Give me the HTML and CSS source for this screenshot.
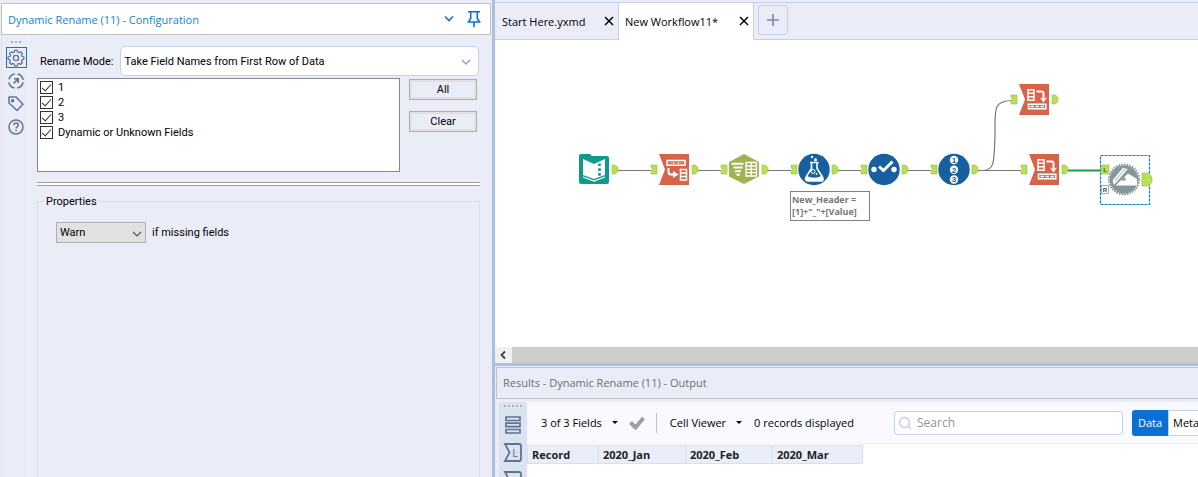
FILE: index.html
```html
<!DOCTYPE html>
<html lang="en">
<head>
  <meta charset="UTF-8" />
  <meta name="viewport" content="width=device-width, initial-scale=1" />
  <title>New Workflow11*</title>
  <link rel="stylesheet" href="styles.css">
</head>
<body>
  <aside class="config">
    <header class="config-title">
      <h1>Dynamic Rename (11) - Configuration</h1>
      <button class="icon-btn" aria-label="Window options">
        <svg width="12" height="20" viewBox="0 0 12 20"><path d="M2 7.500l4 4 4-4" fill="none" stroke="#0c70d2" stroke-width="1.600"/></svg>
      </button>
      <button class="icon-btn" aria-label="Pin panel">
        <svg width="14" height="20" viewBox="0 0 14 20"><path d="M1 2.700h12M3.700 3v6.500L1.500 13h11L10.300 9.500V3M7 13v5" fill="none" stroke="#0c70d2" stroke-width="1.600"/></svg>
      </button>
    </header>
    <div class="config-body">
      <nav class="rail">
        <span class="grip"></span>
        <button class="rail-btn active" aria-label="Configuration">
          <svg width="18" height="18" viewBox="0 0 18 18" fill="none" stroke="#5f7393" stroke-width="1.300">
            <path d="M7.600 1.800h2.800l.5 2 1.300.6 1.800-1.100 2 2-1.100 1.800.5 1.300 2 .5v2.400l-2 .5-.6 1.300 1.100 1.800-2 1.900-1.800-1-1.200.5-.5 2H7.600l-.5-2-1.300-.5-1.800 1-1.900-1.900 1-1.800-.5-1.300-2-.5V8.900l2-.5.600-1.300-1.100-1.800 2-2 1.800 1.100 1.200-.6z" transform="translate(.5 -.400) scale(.94)"/>
            <circle cx="9" cy="9" r="2.600"/>
          </svg>
        </button>
        <button class="rail-btn" aria-label="Navigation">
          <svg width="18" height="18" viewBox="0 0 18 18" fill="none" stroke="#5f7393" stroke-width="1.600">
            <circle cx="9" cy="9" r="7.200" stroke-dasharray="8.300 3" stroke-dashoffset="-1.500"/>
            <path d="M6.500 11.500l4.500-4.500M7 6.800h4.200V11"/>
          </svg>
        </button>
        <button class="rail-btn" aria-label="Annotation">
          <svg width="18" height="18" viewBox="0 0 18 18" fill="none" stroke="#5f7393" stroke-width="1.500">
            <path d="M2 2h7l7 7.200-6 6.300-8-7.500z" stroke-linejoin="round"/><circle cx="5.600" cy="5.800" r="1" fill="#5f7393"/>
          </svg>
        </button>
        <button class="rail-btn" aria-label="Help">
          <svg width="18" height="18" viewBox="0 0 18 18" fill="none" stroke="#5f7393" stroke-width="1.500">
            <circle cx="9" cy="9" r="7"/><path d="M6.800 7.200c0-3 4.500-2.800 4.500-.1 0 1.700-2.200 1.600-2.200 3.300M9.100 11.700v1.500"/>
          </svg>
        </button>
      </nav>
      <form class="settings">
        <div class="mode-row">
          <label for="mode">Rename Mode:</label>
          <div class="select-box mode-box">
            <select id="mode"><option>Take Field Names from First Row of Data</option></select>
            <svg class="chevron" width="10" height="8" viewBox="0 0 10 8"><path d="M1 2l4 4 4-4" fill="none" stroke="#94a3c0" stroke-width="1.500"/></svg>
          </div>
        </div>
        <div class="fields-row">
          <div class="field-list">
            <label><input type="checkbox" checked>1</label>
            <label><input type="checkbox" checked>2</label>
            <label><input type="checkbox" checked>3</label>
            <label><input type="checkbox" checked>Dynamic or Unknown Fields</label>
          </div>
          <div class="field-actions">
            <button type="button">All</button>
            <button type="button">Clear</button>
          </div>
        </div>
        <div class="splitter"></div>
        <fieldset class="properties">
          <legend>Properties</legend>
          <div class="select-box warn-box">
            <select id="missing"><option>Warn</option></select>
            <svg class="chevron" width="10" height="8" viewBox="0 0 10 8"><path d="M1 2l4 4 4-4" fill="none" stroke="#555" stroke-width="1.200"/></svg>
          </div>
          <label for="missing">if missing fields</label>
        </fieldset>
      </form>
    </div>
  </aside>

  <main class="workspace">
    <div class="tabs">
      <div class="tab">
        <a href="#">Start Here.yxmd</a>
        <button class="icon-btn" aria-label="Close Start Here"><svg width="10" height="10" viewBox="0 0 10 10"><path d="M1 1l8 8M9 1L1 9" stroke="#000" stroke-width="1.500"/></svg></button>
      </div>
      <div class="tab current">
        <a href="#">New Workflow11*</a>
        <button class="icon-btn" aria-label="Close New Workflow11"><svg width="10" height="10" viewBox="0 0 10 10"><path d="M1 1l8 8M9 1L1 9" stroke="#000" stroke-width="1.500"/></svg></button>
      </div>
      <div class="tab-rest">
        <button class="add-tab" aria-label="New workflow"><svg width="14" height="14" viewBox="0 0 14 14"><path d="M7 1v12M1 7h12" stroke="#7688a8" stroke-width="1.600"/></svg></button>
      </div>
    </div>

    <section class="canvas">
      <svg class="flow" width="100%" height="100%">
        <defs>
          <path id="out" d="M0 0h3.500l2.500 2.500v4L3.500 9H0z" fill="#b9e051" stroke="#94bd4b" stroke-width=".6"/>
          <path id="in" d="M0 0h6v9H0V6.500l1.500-2L0 2.500z" fill="#b9e051" stroke="#94bd4b" stroke-width=".6"/>
          <g id="transpose">
            <path d="M0 0h30v31H0l6-15.500z" fill="#d7644a"/>
            <g fill="none" stroke="#fff" stroke-width="1.500">
              <path d="M9 5.800h6v10.400H9zM9 9.200h6M9 12.700h6"/>
              <path d="M9.500 20.200h17.300v4.600H9.500z"/>
              <path d="M17.500 7.500h5q2 0 2 2v6" stroke-width="2"/>
              <path d="M11.500 22.500h13.500" stroke-dasharray="3.500 1.500"/>
            </g>
            <path d="M21 13.500l3.500 1.500 3.500-1.500-3.500 5z" fill="#fff"/>
          </g>
        </defs>

        <!-- connections -->
        <g fill="none" stroke="#777" stroke-width="1.200">
          <path d="M123 130.500h33M203 130.500h23M273 130.500h23M343 130.500h23M413 130.500h23M483 130.500h43"/>
          <path d="M483 130.500h4c13 0 12-8 13-36 0-26-2-34 18-34"/>
          <path d="M573 130.500h34" stroke="#12a04a" stroke-width="2"/>
        </g>

        <!-- input data -->
        <g transform="translate(84 114)">
          <path d="M2 0h9l2 2h15q2 0 2 2v24q0 2-2 2H2q-2 0-2-2V2q0-2 2-2z" fill="#0f9b8a"/>
          <path d="M4 5l11 5v15L4 21zM26 5l-11 5v15l11-4z" fill="#fff"/>
          <path d="M4 23l11 4 11-4" fill="none" stroke="#fff" stroke-width="1.200"/>
          <path d="M20.500 9.500v13" stroke="#0f9b8a" stroke-width="2.600" stroke-dasharray="2.600 2.200"/>
          <use href="#out" x="33" y="11"/>
        </g>

        <!-- cross tab -->
        <g transform="translate(164 114)">
          <path d="M0 0h30v31H0l6-15.500z" fill="#d7644a"/>
          <g fill="none" stroke="#fff" stroke-width="1.500">
            <path d="M8 6.500h18v4.800H8zM10 9h14" />
            <path d="M21.500 15.500h6V26h-6zM21.500 19h6M21.500 22.500h6"/>
            <path d="M9.500 14v4q0 2.500 2.500 2.500h3" stroke-width="2"/>
          </g>
          <path d="M14 17l5.500 3.500L14 24z" fill="#fff"/>
          <path d="M10 8.900h14" stroke="#d7644a" stroke-width="1.500" stroke-dasharray="4 1"/>
          <use href="#in" x="-8" y="11"/><use href="#out" x="33" y="11"/>
        </g>

        <!-- data cleansing -->
        <g transform="translate(234 114)">
          <path d="M15 0l15 8v14.500L15 30 0 22.500V8z" fill="#a1b252"/>
          <path d="M2.500 9.800h12M4.500 13.500h9M6 17.200h6M7.500 20.800h3.500" stroke="#fff" stroke-width="2"/>
          <path d="M17 8.500h10.500v13.500H17zM17 12h10.500M17 15.300h10.500M17 18.600h10.500M22.200 8.500V22" fill="none" stroke="#fff" stroke-width="1.300"/>
          <use href="#in" x="-8" y="11"/><use href="#out" x="33" y="11"/>
        </g>

        <!-- formula -->
        <g transform="translate(304 114)">
          <circle cx="15" cy="15.500" r="15.700" fill="#175f9e"/>
          <path d="M11 8.500h8.500M12.500 9v5.500L7 23q-1.500 4 2 4h13q3 0 1.500-4l-5.500-8.500V9" fill="none" stroke="#fff" stroke-width="1.600"/>
          <path d="M7 21.500q8 4.500 16.500 0l1 3.500q0 2-2 2H9q-2 0-2-2z" fill="#fff"/>
          <circle cx="14" cy="17.500" r="2" fill="none" stroke="#fff"/><circle cx="17.500" cy="20" r=".9" fill="#fff"/>
          <circle cx="13" cy="3" r="1.200" fill="#fff"/><circle cx="16.500" cy="5.800" r="1.500" fill="#fff"/>
          <use href="#in" x="-8" y="11"/><use href="#out" x="33" y="11"/>
        </g>

        <!-- select -->
        <g transform="translate(374 114)">
          <circle cx="15" cy="15.500" r="15.700" fill="#175f9e"/>
          <circle cx="5" cy="15.500" r="2.700" fill="#fff"/><circle cx="25" cy="15.500" r="2.700" fill="#fff"/>
          <path d="M10 12.500l4.500 4L23.500 7.500" fill="none" stroke="#fff" stroke-width="3"/>
          <use href="#in" x="-8" y="11"/><use href="#out" x="33" y="11"/>
        </g>

        <!-- record id -->
        <g transform="translate(444 114)">
          <circle cx="15" cy="15.500" r="15.700" fill="#175f9e"/>
          <g fill="#fff"><circle cx="15" cy="6" r="4.200"/><circle cx="15" cy="15.800" r="4.200"/><circle cx="15" cy="25.500" r="4.200"/></g>
          <g class="digits"><text x="15" y="9">1</text><text x="15" y="19">2</text><text x="15" y="28">3</text></g>
          <use href="#in" x="-8" y="11"/><use href="#out" x="33" y="11"/>
        </g>

        <!-- transpose, both branches -->
        <g transform="translate(524 44)">
          <use href="#transpose"/><use href="#in" x="-8" y="11"/><use href="#out" x="33" y="11"/>
        </g>
        <g transform="translate(534 114)">
          <use href="#transpose"/><use href="#in" x="-8" y="11"/><use href="#out" x="33" y="11"/>
        </g>

        <!-- dynamic rename, selected -->
        <g transform="translate(605 115)">
          <rect x=".5" y=".5" width="49" height="49" fill="none" stroke="#0c78d4" stroke-width="1.200" stroke-dasharray="3 1"/>
          <circle cx="24" cy="24.500" r="14.200" fill="#86979b"/>
          <circle cx="24" cy="24.500" r="15" fill="none" stroke="#86979b" stroke-width="1.800" stroke-dasharray="1.600 1.100"/>
          <path d="M16.500 29.500L28 18.500l9 5.500v6.500H16z" fill="#fff"/>
          <path d="M21 25.500l3.500-3.500 1.500 3.500z" fill="#86979b"/>
          <path d="M12.500 25L23 12.500l5 1.500L17 27l-3.500 3.500z" fill="#fff" stroke="#86979b" stroke-width=".6"/>
          <path d="M15 26L25.500 13.500" stroke="#86979b" stroke-width=".8"/>
          <rect x="1" y="10" width="8" height="9" fill="#b9e051" stroke="#94bd4b" stroke-width=".6"/>
          <rect x="1.500" y="30.500" width="7" height="8" fill="#fff" stroke="#999" stroke-width=".8"/>
          <text class="anchor" x="5" y="17">L</text>
          <text class="anchor" x="5" y="37">R</text>
          <path d="M42 18h6l4 4v5l-4 4h-6z" fill="#b9e051" stroke="#94bd4b" stroke-width=".6"/>
        </g>
      </svg>
      <div class="annotation">New_Header =<br>[1]+"_"+[Value]</div>
    </section>

    <div class="hscroll">
      <button aria-label="Scroll left"><svg width="8" height="10" viewBox="0 0 8 10"><path d="M6 1.500L2.500 5 6 8.500" fill="none" stroke="#444" stroke-width="1.800"/></svg></button>
    </div>

    <section class="results">
      <h2>Results - Dynamic Rename (11) - Output</h2>
      <div class="results-body">
        <nav class="results-rail">
          <span class="grip"></span>
          <button class="icon-btn" aria-label="Messages"><svg width="18" height="20" viewBox="0 0 18 20"><path d="M2 2h14v3.500H2zM2 8.200h14v3.500H2zM2 14.500h14V18H2z" fill="none" stroke="#5f7393" stroke-width="1.700"/></svg></button>
          <button class="icon-btn" aria-label="Left input"><svg width="20" height="20" viewBox="0 0 20 20"><path d="M2 1h14q2 0 2 2v13q0 2-2 2H2l4.500-8.500z" fill="none" stroke="#5f7393" stroke-width="1.800"/><text class="rail-letter" x="12" y="14">L</text></svg></button>
          <button class="icon-btn" aria-label="Right input"><svg width="20" height="20" viewBox="0 0 20 20"><path d="M2 1h14q2 0 2 2v13q0 2-2 2H2l4.500-8.500z" fill="none" stroke="#5f7393" stroke-width="1.800"/></svg></button>
        </nav>
        <div class="results-main">
          <div class="toolbar">
            <button class="menu-btn">3 of 3 Fields<span class="caret"></span></button>
            <button class="icon-btn apply" aria-label="Apply"><svg width="16" height="14" viewBox="0 0 16 14"><path d="M1.500 6.500l5 5L14.500 2" fill="none" stroke="#a0a0a0" stroke-width="4"/></svg></button>
            <span class="divider"></span>
            <button class="menu-btn">Cell Viewer<span class="caret"></span></button>
            <span class="count">0 records displayed</span>
            <div class="search">
              <svg width="14" height="14" viewBox="0 0 14 14"><circle cx="6.500" cy="6.500" r="5" fill="none" stroke="#c5d0e6" stroke-width="1.500"/><path d="M10 10l3 3" stroke="#c5d0e6" stroke-width="1.500"/></svg>
              <input type="search" placeholder="Search" aria-label="Search">
            </div>
            <div class="view-switch">
              <button class="on">Data</button><button>Meta</button>
            </div>
          </div>
          <table>
            <colgroup><col class="c-record"><col class="c-month"><col class="c-month"><col class="c-last"></colgroup>
            <thead><tr><th>Record</th><th>2020_Jan</th><th>2020_Feb</th><th>2020_Mar</th></tr></thead>
          </table>
        </div>
      </div>
    </section>
  </main>
</body>
</html>
```
FILE: styles.css
```css
* {
  box-sizing: border-box;
}
body {
  margin: 0;
  height: 100vh;
  display: flex;
  overflow: hidden;
  background: #eaedf8;
  color: #000;
  font-family: "Open Sans", "Noto Sans", sans-serif;
  font-size: 11px;
}
button, input, select {
  font: inherit;
  color: inherit;
}
svg {
  display: block;
}
h1, h2 {
  margin: 0;
  font-size: 11px;
  font-weight: 400;
}
.icon-btn {
  padding: 0;
  border: 0;
  background: none;
}

/* configuration panel */
.config {
  flex: 0 0 492px;
  display: flex;
  flex-direction: column;
  padding: 3px 1px 0;
}
.config-title {
  display: flex;
  align-items: center;
  gap: 12px;
  height: 32px;
  padding: 0 9px 0 6px;
  background: #fff;
  border: 1px solid #c2c2c2;
  color: #1583cf;
}
.config-title h1 {
  flex: 1;
}
.config-body {
  flex: 1;
  display: flex;
}
.rail {
  flex: 0 0 28px;
  display: flex;
  flex-direction: column;
  align-items: center;
  gap: 2px;
  margin-right: 8px;
  padding: 6px 0 0 2px;
  border-left: 1px solid #e0e2ea;
  border-right: 1px solid #f1f3fa;
}
.grip {
  width: 11px;
  height: 2px;
  margin-bottom: 2px;
  background: repeating-linear-gradient(to right, #b3b3b3 0 2px, transparent 2px 4px);
}
.rail-btn {
  width: 21px;
  height: 21px;
  padding: 0;
  display: flex;
  align-items: center;
  justify-content: center;
  background: none;
  border: 1px solid transparent;
}
.rail-btn.active {
  border-color: #0c78d4;
}
.settings {
  flex: 1;
  display: flex;
  flex-direction: column;
  padding: 11px 11px 0 0;
  font-family: Roboto, "Liberation Sans", sans-serif;
}
.mode-row {
  display: flex;
  align-items: center;
  gap: 7px;
  padding-left: 3px;
  margin-right: 1px;
}
.mode-row label {
  flex: 0 0 73px;
  white-space: nowrap;
}
.select-box {
  position: relative;
}
.select-box select {
  appearance: none;
  width: 100%;
  height: 100%;
  padding: 0 3px;
  border: 0;
  background: none;
}
.chevron {
  position: absolute;
  right: 7px;
  top: 50%;
  margin-top: -3px;
  pointer-events: none;
}
.mode-box {
  flex: 1;
  height: 30px;
  background: #fff;
  border: 1px solid #c6d0e8;
  border-radius: 5px;
}
.fields-row {
  display: flex;
  gap: 9px;
  margin: 2px 3px 0 0;
}
.field-list {
  flex: 1;
  height: 94px;
  padding: 1px 2px;
  background: #fff;
  border: 1px solid #828790;
}
.field-list label {
  display: flex;
  align-items: center;
  gap: 5px;
  height: 15px;
}
.field-list input {
  appearance: none;
  display: flex;
  justify-content: center;
  width: 13px;
  height: 13px;
  margin: 0;
  border: 1px solid #333;
  background: #fff;
}
.field-list input:checked::after {
  content: "";
  width: 4px;
  height: 8px;
  border: solid #333;
  border-width: 0 1px 1px 0;
  transform: rotate(42deg);
}
.field-actions {
  flex: 0 0 68px;
  display: flex;
  flex-direction: column;
  gap: 11px;
  padding-top: 1px;
}
.field-actions button {
  height: 21px;
  padding: 0;
  background: #eaedf8;
  border: 1px solid #adadad;
  box-shadow: inset 0 0 0 2px #e1e1e1;
}
.splitter {
  height: 4px;
  margin-top: 10px;
  border: solid #a0a0a0;
  border-width: 1px 0;
  background: #fff;
}
.properties {
  flex: 1;
  display: flex;
  align-items: flex-start;
  gap: 6px;
  margin: 9px 0 0;
  padding: 14px 18px 0;
  border: 1px solid #dcdcdc;
  border-bottom: 0;
}
.properties legend {
  margin-left: -12px;
  padding: 0 2px;
}
.properties label {
  line-height: 21px;
}
.warn-box {
  width: 90px;
  height: 21px;
  background: #e1e1e1;
  border: 1px solid #adadad;
}
.warn-box .chevron {
  right: 3px;
}

/* workflow side */
.workspace {
  flex: 1;
  min-width: 0;
  display: flex;
  flex-direction: column;
  border-left: 3px solid #adbee0;
}
.tabs {
  display: flex;
  height: 40px;
  padding-top: 2px;
}
.tab {
  display: flex;
  align-items: center;
  justify-content: space-between;
  width: 124px;
  padding: 0 4px 0 7px;
  border: solid #c6d0e8;
  border-width: 1px 1px 1px 0;
}
.tab a {
  color: #000;
  text-decoration: none;
}
.tab.current {
  width: 135px;
  padding-left: 6px;
  background: #fff;
  border-bottom-color: #fff;
}
.tab-rest {
  flex: 1;
  padding: 2px 0 0 4px;
  border: solid #c6d0e8;
  border-width: 1px 0;
}
.add-tab {
  display: flex;
  align-items: center;
  justify-content: center;
  width: 30px;
  height: 30px;
  padding: 0;
  background: none;
  border: 1px solid #c6d0e8;
  border-radius: 3px;
}
.canvas {
  position: relative;
  flex: 1;
  background: #fff;
}
.flow {
  position: absolute;
  inset: 0;
}
.digits {
  font: bold 8px "Liberation Sans", Arial, sans-serif;
  fill: #175f9e;
  text-anchor: middle;
}
.anchor {
  font: bold 6px "Liberation Sans", Arial, sans-serif;
  fill: #444;
  text-anchor: middle;
}
.annotation {
  position: absolute;
  left: 295px;
  top: 151px;
  width: 80px;
  padding: 2px 1px;
  background: #fff;
  border: 1px solid #808080;
  color: #777;
  font-size: 9px;
  font-weight: 700;
  line-height: 12px;
  white-space: nowrap;
}
.hscroll {
  height: 16px;
  background: #cdcdcd;
}
.hscroll button {
  width: 17px;
  height: 16px;
  padding: 0 4px;
  border: 0;
  background: #f0f0f0;
}

/* results */
.results {
  height: 114px;
  border-top: 3px solid #adbee0;
  overflow: hidden;
}
.results h2 {
  height: 32px;
  margin: 1px 0 0 1px;
  padding-left: 6px;
  border: 1px solid #c2c2c2;
  border-right: 0;
  color: #6e6e6e;
  line-height: 30px;
}
.results-body {
  display: flex;
  height: 100px;
  padding: 3px 0 0 4px;
}
.results-rail {
  flex: 0 0 28px;
  display: flex;
  flex-direction: column;
  align-items: center;
  gap: 8px;
  padding-top: 3px;
  background: #dbe2f0;
  border-radius: 4px 4px 0 0;
}
.results-rail .grip {
  width: 19px;
  margin-bottom: 0;
}
.rail-letter {
  font: 11px "Open Sans", sans-serif;
  fill: #5f7393;
  text-anchor: middle;
}
.results-main {
  flex: 1;
  min-width: 0;
  background: #fff;
}
.toolbar {
  display: flex;
  align-items: center;
  height: 42px;
  padding-left: 14px;
  background: #f8faff;
  border-bottom: 1px solid #eef0f5;
}
.menu-btn {
  display: flex;
  align-items: center;
  gap: 10px;
  padding: 0;
  border: 0;
  background: none;
  white-space: nowrap;
}
.caret {
  border: 3px solid transparent;
  border-top-color: #000;
  border-bottom: 0;
}
.apply {
  margin: 0 11px;
}
.divider {
  width: 1px;
  height: 20px;
  margin-right: 13px;
  background: #c2c2c2;
}
.count {
  flex: 1;
  margin-left: 12px;
  white-space: nowrap;
}
.search {
  display: flex;
  align-items: center;
  width: 229px;
  height: 24px;
  padding-left: 3px;
  background: #fff;
  border: 1px solid #c6d0e8;
  border-radius: 3px;
}
.search input {
  flex: 1;
  min-width: 0;
  padding: 0 5px;
  border: 0;
  background: none;
  font-size: 12px;
}
.search input::placeholder {
  color: #959595;
}
.view-switch {
  display: flex;
  margin-left: 9px;
}
.view-switch button {
  width: 30px;
  height: 26px;
  padding: 0 0 0 4px;
  border: 1px solid #c6d0e8;
  border-right: 0;
  background: #fff;
  text-align: left;
}
.view-switch .on {
  width: 36px;
  padding: 0;
  border: 0;
  border-radius: 3px 0 0 3px;
  background: #0c70d2;
  color: #fff;
  text-align: center;
}
table {
  table-layout: fixed;
  width: 336px;
  margin-top: 1px;
  border-collapse: collapse;
}
.c-record {
  width: 71px;
}
.c-month {
  width: 87px;
}
th {
  height: 18px;
  padding: 0 4px 1px;
  background: #e9eef8;
  border: 1px solid #d9e0ec;
  color: #222;
  font-size: 11px;
  line-height: 15px;
  text-align: left;
}
```
